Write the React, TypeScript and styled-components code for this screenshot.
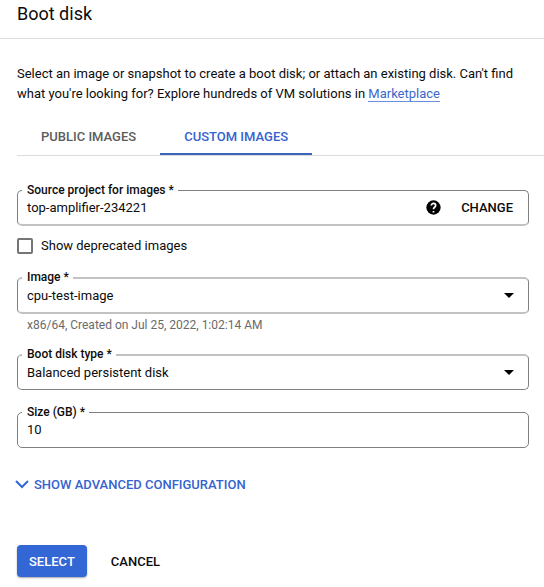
import React from "react";
import styled, { createGlobalStyle } from "styled-components";

const GlobalStyle = createGlobalStyle`
  * { box-sizing: border-box; }
  body {
    margin: 0;
    background: #fff;
    color: #0c0c0c;
    font: 400 13px/20px Roboto, sans-serif;
    overflow: hidden;
  }
  button { font: inherit; color: inherit; background: none; border: 0; padding: 0; margin: 0; }
`;

const Panel = styled.main`
  display: flex;
  flex-direction: column;
  width: 544px;
  height: 587px;
`;

const Header = styled.header`
  height: 39px;
  padding: 2px 17px 0;
  border-bottom: 1px solid #dcdcdc;
`;

const Title = styled.h1`
  margin: 0;
  font-size: 18px;
  font-weight: 400;
  line-height: 24px;
`;

const Intro = styled.p`
  margin: 25px 17px 0;
  white-space: nowrap;
`;

const Link = styled.a`
  color: #3c67cb;
  border-bottom: 1px solid #6b8fe0;
`;

const Tabs = styled.div`
  display: flex;
  margin: 15px 0 0 17px;
  height: 37px;
  border-bottom: 1px solid #dcdcdc;
`;

const Tab = styled.button<{ $active?: boolean }>`
  padding: 2px 24px 0;
  font-weight: 500;
  color: ${(p) => (p.$active ? "#3563cf" : "#5c5c5c")};
  border-bottom: 2px solid ${(p) => (p.$active ? "#3c64b8" : "transparent")};
`;

const Form = styled.form`
  display: flex;
  flex-direction: column;
  margin: 34px 15px 0 17px;
`;

type Edge = "crisp" | "soft";
const edge = (e: Edge) => (e === "soft" ? "2px solid #c2c2c2" : "1px solid #808080");

const Outline = styled.div<{ $top: Edge; $bottom: Edge; $gap: number; $height: number }>`
  position: relative;
  display: flex;
  align-items: center;
  height: ${(p) => p.$height}px;
  margin-top: ${(p) => p.$gap}px;
  padding: 0 14px 0 9px;
  border: 1px solid #808080;
  border-top: ${(p) => edge(p.$top)};
  border-bottom: ${(p) => edge(p.$bottom)};
  border-radius: 5px;
`;

const Label = styled.label<{ $top: Edge }>`
  position: absolute;
  left: 4px;
  top: ${(p) => (p.$top === "soft" ? -10 : -9)}px;
  padding: 0 4px 0 5px;
  background: #fff;
  font-size: 12px;
  font-weight: 500;
  line-height: 16px;
`;

const Value = styled.span`
  flex: 1;
`;

const ChangeButton = styled.button`
  margin: 0 1px 0 20px;
  font-weight: 500;
`;

const Arrow = styled.svg`
  width: 10px;
  height: 5px;
`;

const CheckRow = styled.label`
  display: flex;
  align-items: center;
  gap: 8px;
  height: 20px;
  margin-top: 10px;
`;

const CheckBox = styled.span`
  width: 16px;
  height: 16px;
  border: 2px solid #757575;
  border-radius: 2px;
`;

const Hint = styled.div`
  margin-top: 3px;
  padding-left: 10px;
  font-size: 12px;
  line-height: 16px;
  color: #6a6a6a;
`;

const Advanced = styled.button`
  display: flex;
  align-items: center;
  gap: 5px;
  align-self: flex-start;
  height: 20px;
  margin: 26px 0 0 -2px;
  font-weight: 500;
  color: #3563cf;
`;

const AdvancedText = styled.span`
  padding-top: 1px;
`;

const Actions = styled.footer`
  display: flex;
  gap: 12px;
  margin: 51px 17px 0;
`;

const Action = styled.button<{ $primary?: boolean }>`
  height: 32px;
  padding: 1px 12px 0;
  border-radius: 4px;
  font-weight: 500;
  color: ${(p) => (p.$primary ? "#fff" : "#0c0c0c")};
  background: ${(p) => (p.$primary ? "#3367d6" : "transparent")};
  box-shadow: ${(p) => (p.$primary ? "0 1px 2px rgba(0,0,0,.35)" : "none")};
`;

const HelpIcon = () => (
  <svg width="15" height="15" viewBox="1.5 1.5 21 21">
    <circle cx="12" cy="12" r="10" fill="#000" />
    <path
      d="M9 9.200c0-1.650 1.350-3 3-3s3 1.350 3 3c0 2.200-3 2.600-3 5.300M12 16.800v2.200"
      fill="none"
      stroke="#fff"
      strokeWidth="2.400"
    />
  </svg>
);

const DropArrow = () => (
  <Arrow viewBox="0 0 10 5">
    <path d="M0 0h10L5 5z" fill="#000" />
  </Arrow>
);

type FieldProps = {
  label: string;
  value: string;
  gap?: number;
  height?: number;
  top?: Edge;
  bottom?: Edge;
  children?: React.ReactNode;
};

const Field = ({ label, value, gap = 0, height = 36, top = "crisp", bottom = "crisp", children }: FieldProps) => (
  <Outline $gap={gap} $height={height} $top={top} $bottom={bottom}>
    <Label $top={top}>{label} *</Label>
    <Value>{value}</Value>
    {children}
  </Outline>
);

export default function App() {
  return (
    <>
      <GlobalStyle />
      <Panel>
        <Header>
          <Title>Boot disk</Title>
        </Header>
        <Intro>
          Select an image or snapshot to create a boot disk; or attach an existing disk. Can't find
          <br />
          what you're looking for? Explore hundreds of VM solutions in <Link>Marketplace</Link>
        </Intro>
        <Tabs>
          <Tab>PUBLIC IMAGES</Tab>
          <Tab $active>CUSTOM IMAGES</Tab>
        </Tabs>
        <Form>
          <Field label="Source project for images" value="top-amplifier-234221" bottom="soft">
            <HelpIcon />
            <ChangeButton type="button">CHANGE</ChangeButton>
          </Field>
          <CheckRow>
            <CheckBox />
            Show deprecated images
          </CheckRow>
          <Field label="Image" value="cpu-test-image" gap={21} height={37} top="soft" bottom="soft">
            <DropArrow />
          </Field>
          <Hint>x86/64, Created on Jul 25, 2022, 1:02:14 AM</Hint>
          <Field label="Boot disk type" value="Balanced persistent disk" gap={21} top="soft">
            <DropArrow />
          </Field>
          <Field label="Size (GB)" value="10" gap={22} />
          <Advanced type="button">
            <svg width="14" height="9" viewBox="0 0 14 9" fill="none" stroke="#3367d6" strokeWidth="2">
              <path d="M1 1l6 6 6-6" />
            </svg>
            <AdvancedText>SHOW ADVANCED CONFIGURATION</AdvancedText>
          </Advanced>
        </Form>
        <Actions>
          <Action $primary>SELECT</Action>
          <Action>CANCEL</Action>
        </Actions>
      </Panel>
    </>
  );
}
